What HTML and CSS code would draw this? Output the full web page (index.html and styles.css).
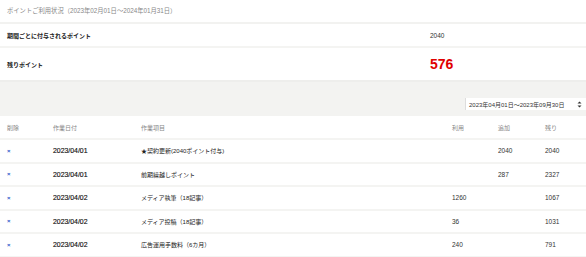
FILE: index.html
```html
<!DOCTYPE html>
<html lang="ja">
<head>
<meta charset="utf-8">
<link rel="stylesheet" href="styles.css">
</head>
<body>
<div class="summary">
  <div class="title">ポイントご利用状況（2023年02月01日～2024年01月31日）</div>
  <div class="srow">
    <div class="slabel">期間ごとに付与されるポイント</div>
    <div class="svalue">2040</div>
  </div>
  <div class="srow tall">
    <div class="slabel">残りポイント</div>
    <div class="svalue big">576</div>
  </div>
</div>
<div class="filter">
  <div class="select">
    <span>2023年04月01日～2023年09月30日</span>
    <svg width="5" height="7" viewBox="0 0 5 7"><path d="M0.5 2.6 L2.5 0.5 L4.5 2.6 Z M0.5 4.4 L2.5 6.5 L4.5 4.4 Z" fill="#333"/></svg>
  </div>
</div>
<div class="table">
  <div class="tr th">
    <div>削除</div><div>作業日付</div><div>作業項目</div><div>利用</div><div>追加</div><div>残り</div>
  </div>
  <div class="tr">
    <div class="del">×</div><div class="date">2023/04/01</div><div>★契約更新(2040ポイント付与)</div><div class="num"></div><div class="num">2040</div><div class="num">2040</div>
  </div>
  <div class="tr">
    <div class="del">×</div><div class="date">2023/04/01</div><div>前期繰越しポイント</div><div class="num"></div><div class="num">287</div><div class="num">2327</div>
  </div>
  <div class="tr">
    <div class="del">×</div><div class="date">2023/04/02</div><div>メディア執筆（18記事）</div><div class="num">1260</div><div class="num"></div><div class="num">1067</div>
  </div>
  <div class="tr">
    <div class="del">×</div><div class="date">2023/04/02</div><div>メディア投稿（18記事）</div><div class="num">36</div><div class="num"></div><div class="num">1031</div>
  </div>
  <div class="tr">
    <div class="del">×</div><div class="date">2023/04/02</div><div>広告運用手数料（6カ月）</div><div class="num">240</div><div class="num"></div><div class="num">791</div>
  </div>
</div>
</body>
</html>
```
FILE: styles.css
```css
html, body {
  margin: 0;
  padding: 0;
  background: #fff;
}
body {
  font-family: "Helvetica Neue", "Liberation Sans", "Noto Sans CJK JP", sans-serif;
  font-size: 6px;
  color: #333;
  width: 586px;
  height: 257px;
  overflow: hidden;
}
.title {
  height: 22px;
  line-height: 22px;
  padding-left: 7px;
  color: #888;
  font-size: 6.3px;
  border-bottom: 2px solid #f2f2f0;
}
.srow {
  display: flex;
  align-items: center;
  height: 22px;
  border-bottom: 2px solid #f4f4f2;
}
.srow.tall {
  height: 32px;
  border-bottom: 2px solid #eeeeec;
}
.slabel {
  width: 423px;
  padding-left: 7px;
  font-weight: bold;
  color: #222;
}
.svalue {
  color: #333;
  font-size: 6.5px;
}
.svalue.big {
  color: #e00000;
  font-weight: bold;
  font-size: 14px;
  font-family: "Liberation Sans", sans-serif;
}
.filter {
  background: #f3f3f1;
  height: 34px;
  display: flex;
  justify-content: flex-end;
  align-items: flex-end;
}
.select {
  display: flex;
  align-items: center;
  justify-content: space-between;
  width: 113px;
  height: 12px;
  margin-bottom: 6px;
  padding: 0 4px 0 3px;
  background: #fff;
  border-left: 1px solid #ddd;
  font-size: 6px;
  color: #333;
}
.tr {
  display: grid;
  grid-template-columns: 53px 88px 311px 46px 47px 1fr;
  height: 21.5px;
  align-items: center;
  border-bottom: 2px solid #f4f4f2;
  color: #222;
}
.tr > div:first-child {
  padding-left: 7px;
}
.th {
  height: 22px;
  color: #888;
}
.date {
  font-size: 6.9px;
  color: #111;
  -webkit-text-stroke: 0.15px #111;
}
.num {
  font-size: 6.5px;
  color: #333;
}
.del {
  color: #2b55c8;
  font-size: 6px;
  font-weight: bold;
}
```
